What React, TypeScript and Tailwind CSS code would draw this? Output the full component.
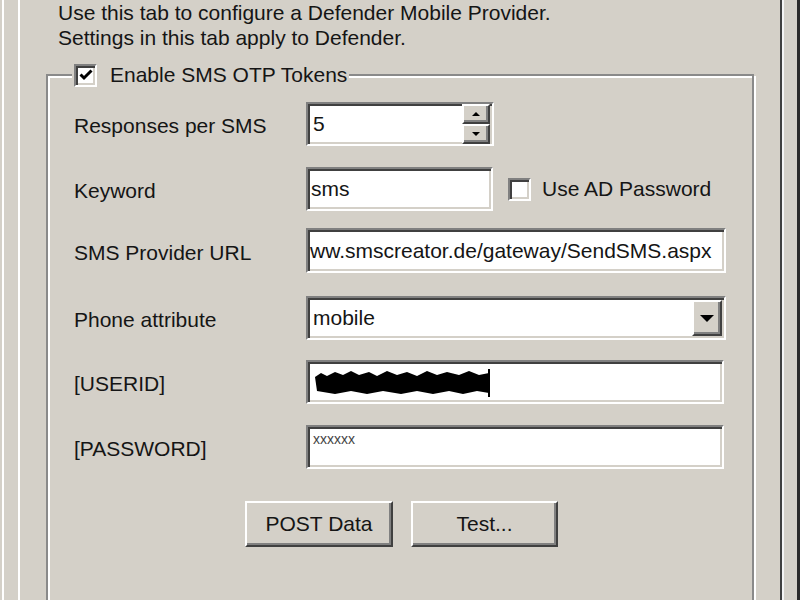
import type { ReactNode } from 'react'

const sunken =
  'border-2 border-t-[#808080] border-l-[#808080] border-b-white border-r-white bg-white shadow-[inset_2px_2px_0_#404040,inset_-2px_-2px_0_#d4d0c8]'
const raised =
  'border-2 border-t-white border-l-white border-b-[#404040] border-r-[#404040] bg-[#d4d0c8] shadow-[inset_-2px_-2px_0_#808080]'

function Row({ label, children, className }: { label: string; children: ReactNode; className: string }) {
  return (
    <div className={`flex items-center ${className}`}>
      <div className="w-[232px] shrink-0 pt-[4px]">{label}</div>
      {children}
    </div>
  )
}

function CheckBox({ checked }: { checked?: boolean }) {
  return (
    <div className={`h-[23px] w-[23px] shrink-0 ${sunken} flex items-center justify-center`}>
      {checked && (
        <svg width="14" height="12" viewBox="0 0 14 12">
          <path d="M1.5 5.5 L5 9 L12.5 1.5" fill="none" stroke="#000" strokeWidth="3" />
        </svg>
      )}
    </div>
  )
}

function Triangle({ down, size }: { down?: boolean; size: number }) {
  return (
    <svg width={size} height={size / 2} viewBox="0 0 10 5">
      {down ? <path d="M0 0 H10 L5 5 Z" fill="#000" /> : <path d="M0 5 H10 L5 0 Z" fill="#000" />}
    </svg>
  )
}

export default function App() {
  return (
    <div className="flex h-[600px] w-[800px] overflow-hidden bg-[#d4d0c8] text-[21px] text-[#151515] [font-family:'Liberation_Sans',Arial,sans-serif]">
      <div className="ml-[2px] flex flex-1 border-l-2 border-r-[3px] border-l-white border-r-[#2a2a2a]">
        <div className="ml-[14px] mr-[13px] flex flex-1 border-l-2 border-r-2 border-l-white border-r-[#f4f4f4]">
          <div className="flex flex-1 flex-col border-r-2 border-r-[#404040]">
            <div className="pl-[38px] leading-[25px]">
              <p>Use this tab to configure a Defender Mobile Provider.</p>
              <p>Settings in this tab apply to Defender.</p>
            </div>

            <div className="relative ml-[26px] mt-[24px] flex w-[708px] flex-1 flex-col border-l-2 border-r-2 border-t-2 border-[#8a8a8a] pl-[26px] pt-[26px] shadow-[2px_2px_0_#fff,inset_2px_2px_0_#fff]">
              <div className="absolute left-[24px] top-[-13px] flex items-center gap-[13px] bg-[#d4d0c8] pl-[2px] pr-[2px]">
                <CheckBox checked />
                <span className="leading-[24px]">Enable SMS OTP Tokens</span>
              </div>

              <Row label="Responses per SMS" className="h-[44px]">
                <div className={`flex h-full w-[188px] items-center ${sunken}`}>
                  <span className="flex-1 pl-[5px]">5</span>
                  <div className="mr-[2px] flex h-[40px] w-[28px] flex-col">
                    <div className={`flex flex-1 items-center justify-center ${raised}`}>
                      <Triangle size={8} />
                    </div>
                    <div className={`flex flex-1 items-center justify-center ${raised}`}>
                      <Triangle size={8} down />
                    </div>
                  </div>
                </div>
              </Row>

              <Row label="Keyword" className="mt-[21px] h-[44px]">
                <div className={`flex h-full w-[187px] items-center pl-[3px] ${sunken}`}>sms</div>
                <div className="ml-[15px]">
                  <CheckBox />
                </div>
                <span className="ml-[11px]">Use AD Password</span>
              </Row>

              <Row label="SMS Provider URL" className="mt-[17px] h-[45px]">
                <div className={`flex h-full w-[420px] items-center overflow-hidden whitespace-nowrap pl-[2px] ${sunken}`}>
                  ww.smscreator.de/gateway/SendSMS.aspx
                </div>
              </Row>

              <Row label="Phone attribute" className="mt-[23px] h-[44px]">
                <div className={`flex h-full w-[420px] items-center ${sunken}`}>
                  <span className="flex-1 pl-[5px]">mobile</span>
                  <div className={`mr-[2px] flex h-[36px] w-[30px] items-center justify-center ${raised}`}>
                    <Triangle size={14} down />
                  </div>
                </div>
              </Row>

              <Row label="[USERID]" className="mt-[20px] h-[44px]">
                <div className={`flex h-full w-[418px] items-center pl-[5px] ${sunken}`}>
                  <svg width="180" height="30" viewBox="0 0 180 30">
                    <path
                      d="M2 10 L8 6 L14 9 L22 5 L30 8 L38 4 L46 8 L56 5 L64 9 L74 4 L84 8 L94 5 L104 9 L114 4 L124 8 L134 5 L146 8 L156 4 L166 8 L176 6 L176 26 L164 24 L150 27 L136 24 L120 27 L104 24 L88 27 L70 24 L54 27 L38 24 L22 27 L4 24 Z"
                      fill="#000"
                    />
                    <rect x="175" y="2" width="2" height="28" fill="#000" />
                  </svg>
                </div>
              </Row>

              <Row label="[PASSWORD]" className="mt-[21px] h-[44px]">
                <div className={`h-full w-[418px] pl-[5px] pt-[5px] text-[14px] leading-none text-[#444] ${sunken}`}>
                  xxxxxx
                </div>
              </Row>

              <div className="ml-[171px] mt-[32px] flex gap-[18px]">
                <button className={`h-[46px] w-[148px] ${raised}`}>POST Data</button>
                <button className={`h-[46px] w-[147px] ${raised}`}>Test...</button>
              </div>
            </div>
          </div>
        </div>
      </div>
    </div>
  )
}
